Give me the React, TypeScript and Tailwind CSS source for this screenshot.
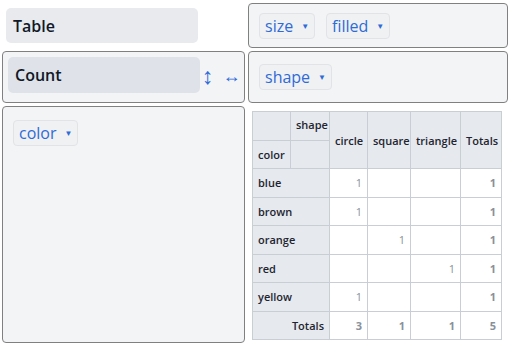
const font = { fontFamily: '"Open Sans", "Noto Sans", sans-serif' };

function Chip({ label }: { label: string }) {
  return (
    <span className="inline-flex items-center h-[26px] px-[5px] rounded-[4px] border border-[#e1e3e7] bg-[#f0f1f3] text-[#2f6bd6] text-[16px] leading-none">
      {label}
      <span className="ml-[8px] text-[8px]">▼</span>
    </span>
  );
}

const rows: [string, (number | null)[]][] = [
  ["blue", [1, null, null]],
  ["brown", [1, null, null]],
  ["orange", [null, 1, null]],
  ["red", [null, null, 1]],
  ["yellow", [1, null, null]],
];

function PivotTable() {
  const th = "bg-[#e6e9ee] border border-[#c9ced5] font-semibold text-[#1e2530] px-[5px] text-left whitespace-nowrap";
  const td = "border border-[#c9ced5] text-right px-[5px] text-[#8a909a]";
  return (
    <table className="border-collapse table-fixed w-[249px] text-[11px] leading-none">
      <colgroup>
        <col className="w-[38px]" />
        <col className="w-[39px]" />
        <col className="w-[38px]" />
        <col className="w-[43px]" />
        <col className="w-[50px]" />
        <col className="w-[41px]" />
      </colgroup>
      <thead>
        <tr className="h-[29px]">
          <th className={th}></th>
          <th className={th + " align-top pt-[7px]"}>shape</th>
          <th className={th + " font-normal px-[4px]"} rowSpan={2}>circle</th>
          <th className={th + " font-normal px-[4px]"} rowSpan={2}>square</th>
          <th className={th + " font-normal px-[4px]"} rowSpan={2}>triangle</th>
          <th className={th + " font-normal px-[4px]"} rowSpan={2}>Totals</th>
        </tr>
        <tr className="h-[28px]">
          <th className={th}>color</th>
          <th className={th}></th>
        </tr>
      </thead>
      <tbody>
        {rows.map(([name, vals]) => (
          <tr key={name} className="h-[28.5px]">
            <th className={th} colSpan={2}>{name}</th>
            {vals.map((v, i) => (
              <td key={i} className={td}>{v ?? ""}</td>
            ))}
            <td className={td + " font-bold text-[#1e2530]"}>1</td>
          </tr>
        ))}
        <tr className="h-[28px]">
          <th className={th + " text-right"} colSpan={2}>Totals</th>
          {[3, 1, 1, 5].map((v, i) => (
            <td key={i} className={td + " font-bold text-[#1e2530]"}>{v}</td>
          ))}
        </tr>
      </tbody>
    </table>
  );
}

export default function App() {
  const box = "border border-[#808080] rounded-[4px] bg-[#f3f4f6]";
  return (
    <div className="w-[510px] h-[346px] bg-white text-[#111827]" style={font}>
      <div className="grid grid-cols-[243px_260px] grid-rows-[45px_52px_237px] gap-[3px] pl-[2px] pt-[3px]">
        <div className="pl-[4px] pt-[5px]">
          <div className="w-[192px] h-[35px] rounded-[5px] bg-[#e8eaee] flex items-center pl-[7px] text-[16px] font-semibold">
            Table
          </div>
        </div>
        <div className={box + " flex items-start gap-[11px] pl-[10px] pt-[9px]"}>
          <Chip label="size" />
          <Chip label="filled" />
        </div>
        <div className={box + " flex items-start pl-[5px] pt-[5px]"}>
          <div className="w-[192px] h-[36px] rounded-[5px] bg-[#dfe3e9] flex items-center pl-[7px] text-[16px] font-semibold">
            Count
          </div>
          <div className="flex items-center h-[36px] ml-[2px] gap-[9px] text-[#2f6bd6]">
            <span className="text-[23px] leading-none">↕</span>
            <span className="text-[18px] leading-none">↔</span>
          </div>
        </div>
        <div className={box + " pl-[10px] pt-[12px]"}>
          <Chip label="shape" />
        </div>
        <div className={box + " pl-[10px] pt-[13px]"}>
          <Chip label="color" />
        </div>
        <div className="pl-[4px] pt-[5px]">
          <PivotTable />
        </div>
      </div>
    </div>
  );
}
